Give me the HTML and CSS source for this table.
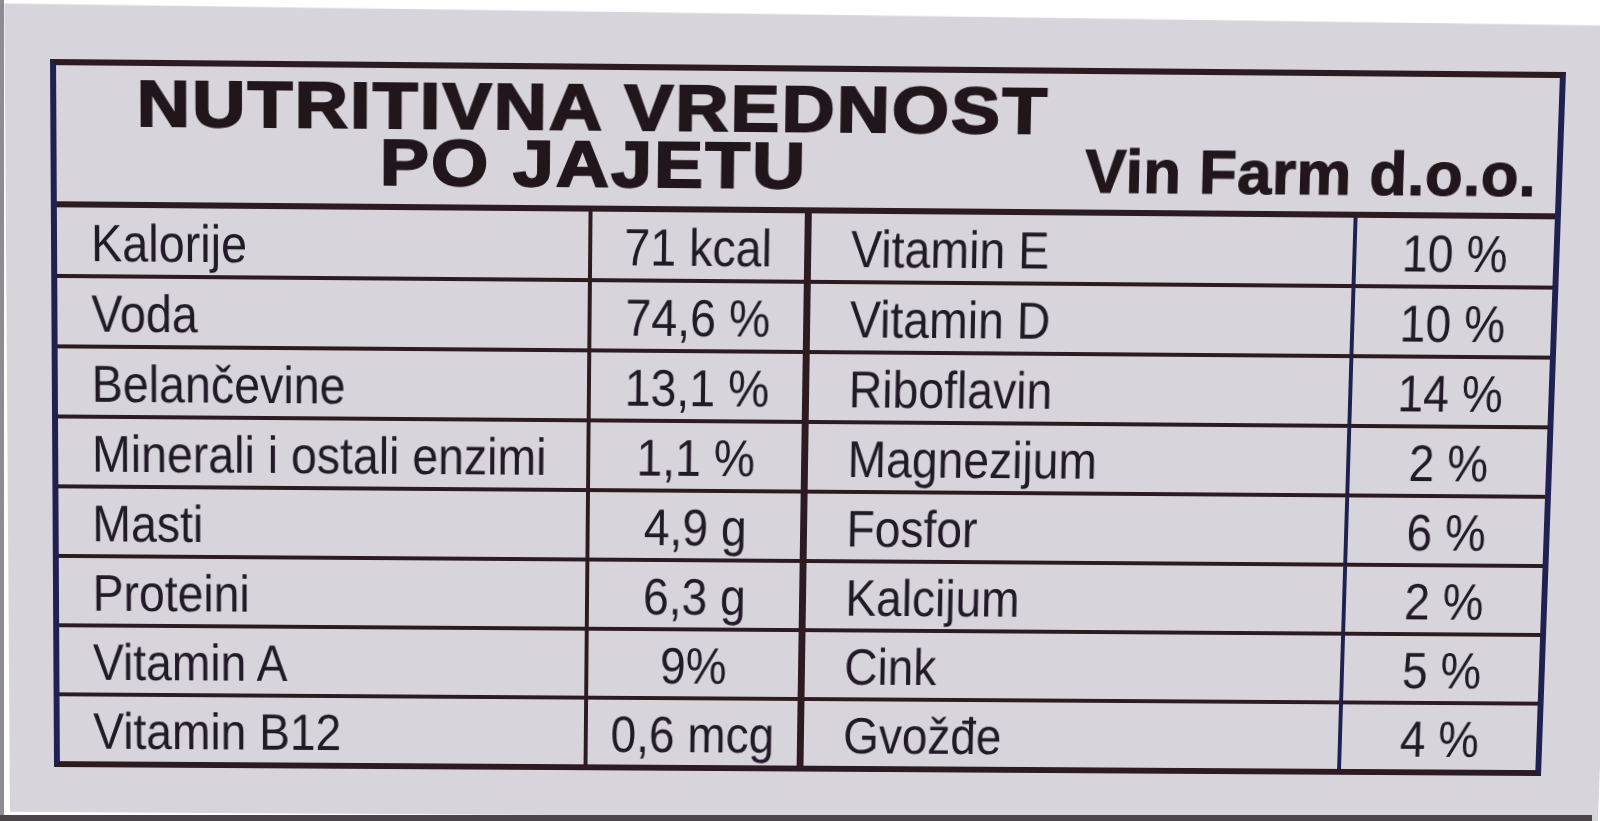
FILE: index.html
```html
<!DOCTYPE html>
<html lang="sr">
<head>
<meta charset="utf-8">
<title>Nutritivna vrednost po jajetu</title>
<link rel="stylesheet" href="styles.css">
</head>
<body>
<div class="paper">
  <div class="label">
    <header class="head">
      <h1 class="title"><span class="tl">NUTRITIVNA VREDNOST</span><span class="tl">PO JAJETU</span></h1>
      <div class="company">Vin Farm d.o.o.</div>
    </header>
    <div class="grid">
      <div class="cell name"><span class="t">Kalorije</span></div><div class="cell val"><span class="t">71 kcal</span></div><div class="cell name2"><span class="t">Vitamin E</span></div><div class="cell pct"><span class="t">10 %</span></div>
      <div class="cell name"><span class="t">Voda</span></div><div class="cell val"><span class="t">74,6 %</span></div><div class="cell name2"><span class="t">Vitamin D</span></div><div class="cell pct"><span class="t">10 %</span></div>
      <div class="cell name"><span class="t">Belančevine</span></div><div class="cell val"><span class="t">13,1 %</span></div><div class="cell name2"><span class="t">Riboflavin</span></div><div class="cell pct"><span class="t">14 %</span></div>
      <div class="cell name"><span class="t">Minerali i ostali enzimi</span></div><div class="cell val"><span class="t">1,1 %</span></div><div class="cell name2"><span class="t">Magnezijum</span></div><div class="cell pct"><span class="t">2 %</span></div>
      <div class="cell name"><span class="t">Masti</span></div><div class="cell val"><span class="t">4,9 g</span></div><div class="cell name2"><span class="t">Fosfor</span></div><div class="cell pct"><span class="t">6 %</span></div>
      <div class="cell name"><span class="t">Proteini</span></div><div class="cell val"><span class="t">6,3 g</span></div><div class="cell name2"><span class="t">Kalcijum</span></div><div class="cell pct"><span class="t">2 %</span></div>
      <div class="cell name"><span class="t">Vitamin A</span></div><div class="cell val"><span class="t">9%</span></div><div class="cell name2"><span class="t">Cink</span></div><div class="cell pct"><span class="t">5 %</span></div>
      <div class="cell name"><span class="t">Vitamin B12</span></div><div class="cell val"><span class="t">0,6 mcg</span></div><div class="cell name2"><span class="t">Gvožđe</span></div><div class="cell pct"><span class="t">4 %</span></div>
    </div>
  </div>
</div>
</body>
</html>
```

FILE: styles.css
```css
html {
  background: linear-gradient(to right, #8e8c92 0 4px, #ffffff 4px);
}

body {
  margin: 0;
  height: 821px;
  overflow: hidden;
  font-family: "Liberation Sans", Arial, sans-serif;
  color: #231a28;
}

body::after {
  content: "";
  position: fixed;
  left: 0;
  bottom: 0;
  width: 1592px;
  height: 6px;
  background: #4a4448;
}

.paper {
  box-sizing: content-box;
  width: 1516px;
  height: 708px;
  margin: 5px 0 0 5px;
  padding: 54px 60px 46px 45px;
  background: #d7d5db;
  clip-path: polygon(0 0, 100% 8px, 100% 100%, 0 100%);
  transform-origin: 45px 54px;
  transform: matrix3d(1.005431, 0.0086218, 0, 0.0000035827, 0.0057605, 1.019595, 0, 0.0000276751, 0, 0, 1, 0, 0, 0, 0, 1);
}

.label {
  box-sizing: border-box;
  width: 1516px;
  height: 708px;
  border: 6px solid #2c1b20;
  border-left-color: #1f2150;
  border-right-color: #1f2150;
  display: flex;
  flex-direction: column;
}

.head {
  box-sizing: border-box;
  height: 140px;
  flex: none;
  border-bottom: 6px solid #2c1b20;
  display: flex;
}

.title {
  flex: none;
  margin: 0 -130px 0 0;
  width: 1073px;
  padding-top: 9px;
  display: flex;
  flex-direction: column;
  align-items: center;
  font-size: 64px;
  line-height: 56px;
  font-weight: 700;
  letter-spacing: 2px;
  color: #21161b;
}

.tl {
  display: inline-block;
  white-space: nowrap;
  transform: scaleX(1.145);
  -webkit-text-stroke: 2px #21161b;
}

.company {
  flex: none;
  margin-left: auto;
  align-self: flex-end;
  padding: 0 20px 7px 0;
  font-size: 62px;
  line-height: 62px;
  font-weight: 700;
  letter-spacing: 0.5px;
  color: #21161b;
  white-space: nowrap;
  -webkit-text-stroke: 1.2px #21161b;
}

.grid {
  flex: 1;
  display: grid;
  grid-template-columns: 532px 224px 545px 203px;
  grid-template-rows: 66px repeat(7, 1fr);
}

.cell {
  box-sizing: border-box;
  display: flex;
  align-items: flex-end;
  padding-bottom: 5px;
  font-size: 52px;
  line-height: 52px;
  white-space: nowrap;
  border-top: 4px solid #2c1b20;
}

.grid > .cell:nth-child(-n+4) {
  border-top: 0;
}

.t {
  display: inline-block;
  transform: scaleX(0.9);
  transform-origin: center bottom;
}

.name {
  padding-left: 34px;
}

.name .t,
.name2 .t {
  transform-origin: left bottom;
}

.val {
  justify-content: center;
  border-left: 4px solid #2c1b20;
  border-right: 7px solid #2c1b20;
}

.name2 {
  padding-left: 40px;
}

.pct {
  justify-content: center;
  border-left: 4px solid #1f2150;
}
```
